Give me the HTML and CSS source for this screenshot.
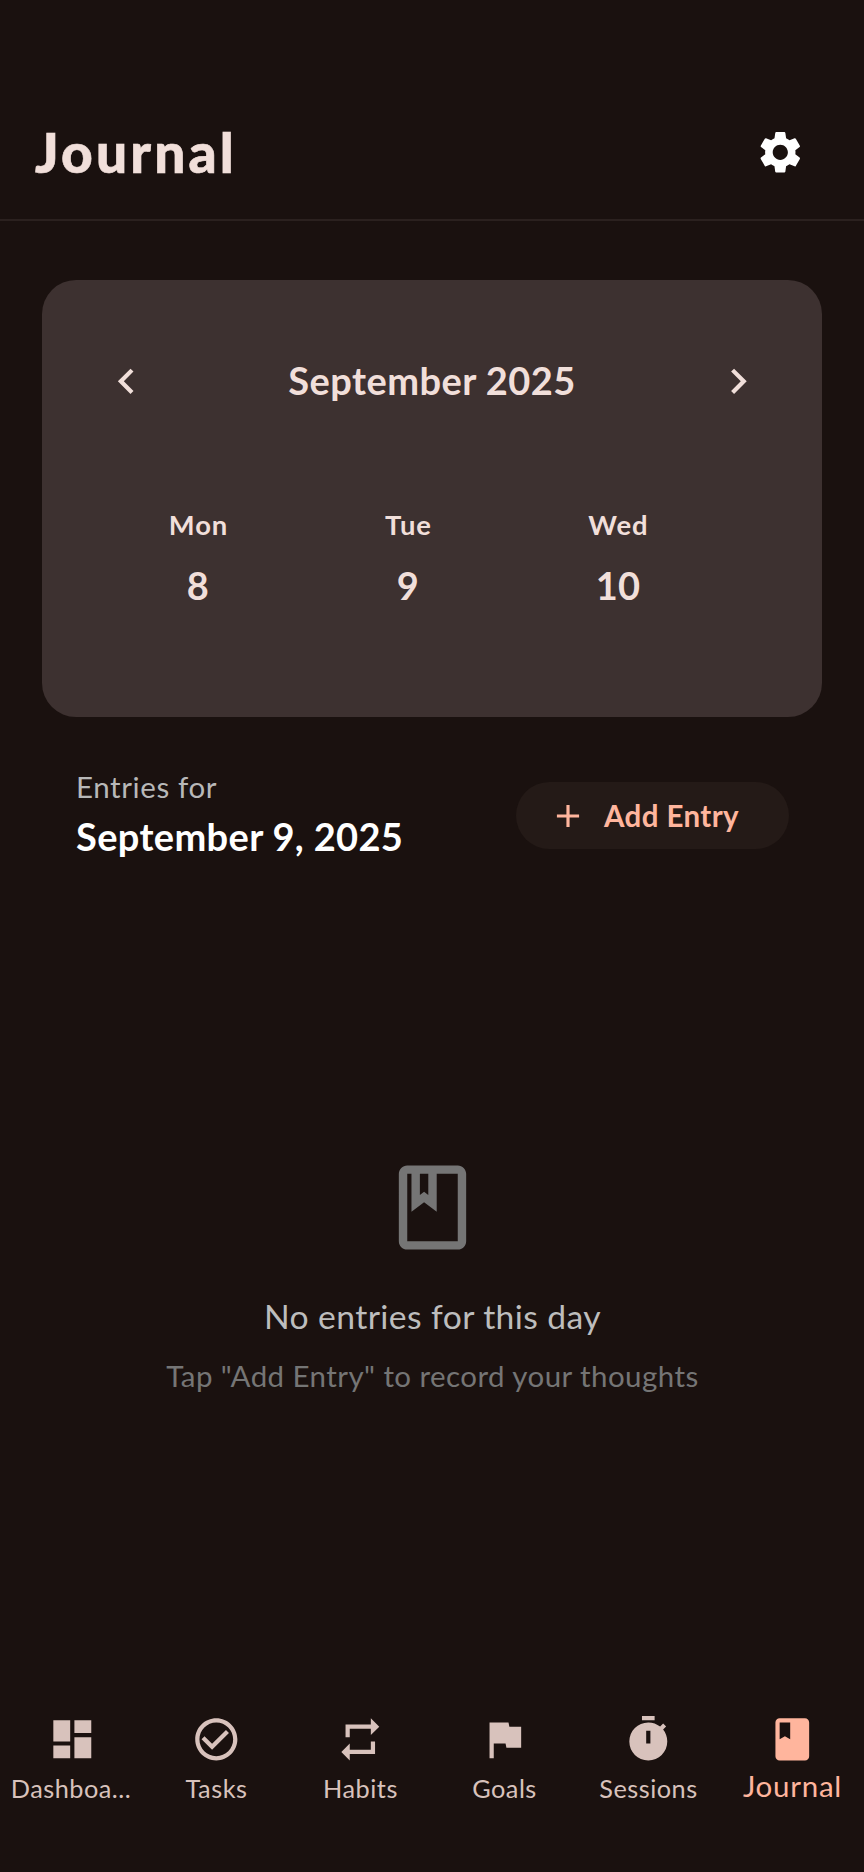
FILE: index.html
```html
<!DOCTYPE html>
<html lang="en">
<head>
<meta charset="utf-8">
<title>Journal</title>
<link rel="stylesheet" href="styles.css">
</head>
<body>
<div class="app">
  <header class="header">
    <h1 class="title">Journal</h1>
    <svg class="icon settings" viewBox="0 0 24 24"><path d="M19.14 12.94c.04-.3.06-.61.06-.94 0-.32-.02-.64-.07-.94l2.03-1.58c.18-.14.23-.41.12-.61l-1.92-3.32c-.12-.22-.37-.29-.59-.22l-2.39.96c-.5-.38-1.03-.7-1.62-.94l-.36-2.54c-.04-.24-.24-.41-.48-.41h-3.84c-.24 0-.43.17-.47.41l-.36 2.54c-.59.24-1.13.57-1.62.94l-2.39-.96c-.22-.08-.47 0-.59.22L2.74 8.87c-.12.21-.08.47.12.61l2.03 1.58c-.05.3-.09.63-.09.94s.02.64.07.94l-2.03 1.58c-.18.14-.23.41-.12.61l1.92 3.32c.12.22.37.29.59.22l2.39-.96c.5.38 1.03.7 1.62.94l.36 2.54c.05.24.24.41.48.41h3.84c.24 0 .44-.17.47-.41l.36-2.54c.59-.24 1.13-.56 1.62-.94l2.39.96c.22.08.47 0 .59-.22l1.92-3.32c.12-.22.07-.47-.12-.61l-2.01-1.58zM12 15.6c-1.98 0-3.6-1.62-3.6-3.6s1.62-3.6 3.6-3.6 3.6 1.62 3.6 3.6-1.62 3.6-3.6 3.6z"/></svg>
  </header>

  <section class="calendar">
    <div class="month">
      <svg class="icon" viewBox="0 0 24 24"><path d="M15.41 7.41L14 6l-6 6 6 6 1.41-1.41L10.83 12z"/></svg>
      <h2 class="month-name">September 2025</h2>
      <svg class="icon" viewBox="0 0 24 24"><path d="M10 6L8.59 7.41 13.17 12l-4.58 4.59L10 18l6-6z"/></svg>
    </div>
    <div class="days">
      <div class="day"><span class="weekday">Mon</span><span class="date">8</span></div>
      <div class="day"><span class="weekday">Tue</span><span class="date">9</span></div>
      <div class="day"><span class="weekday">Wed</span><span class="date">10</span></div>
    </div>
  </section>

  <section class="entries">
    <div class="entries-heading">
      <div class="entries-label">Entries for</div>
      <div class="entries-date">September 9, 2025</div>
    </div>
    <button class="add">
      <svg class="add-icon" viewBox="0 0 24 24"><path d="M19 13h-6v6h-2v-6H5v-2h6V5h2v6h6v2z"/></svg>
      <span>Add Entry</span>
    </button>
  </section>

  <main class="empty">
    <svg class="empty-icon" viewBox="0 0 24 24"><path d="M18 2H6c-1.1 0-2 .9-2 2v16c0 1.1.9 2 2 2h12c1.1 0 2-.9 2-2V4c0-1.1-.9-2-2-2zM9 4h2v5l-1-.75L9 9V4zm9 16H6V4h1v9l3-2.25L13 13V4h5v16z"/></svg>
    <p class="empty-title">No entries for this day</p>
    <p class="empty-hint">Tap "Add Entry" to record your thoughts</p>
  </main>

  <nav class="nav">
    <div class="tab">
      <svg class="icon" viewBox="0 0 24 24"><path d="M3 13h8V3H3v10zm0 8h8v-6H3v6zm10 0h8V11h-8v10zm0-18v6h8V3h-8z"/></svg>
      <span class="tab-label tab-label-long">Dashboa...</span>
    </div>
    <div class="tab">
      <svg class="icon" viewBox="0 0 24 24"><path d="M16.59 7.58L10 14.17l-3.59-3.58L5 12l5 5 8-8zM12 2C6.48 2 2 6.48 2 12s4.48 10 10 10 10-4.48 10-10S17.52 2 12 2zm0 18c-4.42 0-8-3.58-8-8s3.58-8 8-8 8 3.58 8 8-3.58 8-8 8z"/></svg>
      <span class="tab-label">Tasks</span>
    </div>
    <div class="tab">
      <svg class="icon" viewBox="0 0 24 24"><path d="M7 7h10v3l4-4-4-4v3H5v6h2V7zm10 10H7v-3l-4 4 4 4v-3h12v-6h-2v4z"/></svg>
      <span class="tab-label">Habits</span>
    </div>
    <div class="tab">
      <svg class="icon" viewBox="0 0 24 24"><path d="M14.4 6L14 4H5v17h2v-7h5.6l.4 2h7V6z"/></svg>
      <span class="tab-label">Goals</span>
    </div>
    <div class="tab">
      <svg class="icon" viewBox="0 0 24 24"><path fill-rule="evenodd" d="M15 1H9v2h6V1zM11 14h2V8h-2v6zM19.03 7.39l1.42-1.42c-.43-.51-.9-.99-1.41-1.41l-1.42 1.42C16.07 4.74 14.12 4 12 4c-4.97 0-9 4.03-9 9s4.02 9 9 9 9-4.03 9-9c0-2.12-.74-4.07-1.97-5.61z"/></svg>
      <span class="tab-label">Sessions</span>
    </div>
    <div class="tab tab-active">
      <svg class="icon" viewBox="0 0 24 24"><path d="M18 2H6c-1.1 0-2 .9-2 2v16c0 1.1.9 2 2 2h12c1.1 0 2-.9 2-2V4c0-1.1-.9-2-2-2zM6 4h5v8l-2.5-1.5L6 12V4z"/></svg>
      <span class="tab-label">Journal</span>
    </div>
  </nav>
</div>
</body>
</html>
```

FILE: styles.css
```css
* { box-sizing: border-box; }

body {
  margin: 0;
  background: #1a110f;
  color: #f1dfda;
  font-family: Lato, sans-serif;
}

h1, h2, p { margin: 0; }

svg { display: block; fill: currentColor; flex: none; }

.app {
  height: 1872px;
  display: flex;
  flex-direction: column;
  overflow: hidden;
}

.icon { width: 50.6px; height: 50.6px; }

.header {
  height: 221px;
  padding: 85px 58.5px 0 35px;
  display: flex;
  align-items: center;
  justify-content: space-between;
  border-bottom: 2px solid #2b211f;
}

.title {
  font-size: 55px;
  line-height: 66px;
  font-weight: 900;
  letter-spacing: 3.15px;
  -webkit-text-stroke: 0.6px currentColor;
}

.settings { color: #fff; }

.calendar {
  height: 437px;
  margin: 59px 42px 0;
  padding: 76px 58.5px 0;
  border-radius: 34px;
  background: #3d3130;
}

.month {
  display: flex;
  align-items: center;
  justify-content: space-between;
}

.month-name {
  margin-bottom: 2px;
  font-size: 38px;
  line-height: 48px;
  font-weight: 700;
  letter-spacing: 0.45px;
}

.days {
  display: grid;
  grid-template-columns: repeat(3, 210px);
  margin: 98px 0 0 -7.5px;
}

.day {
  display: flex;
  flex-direction: column;
  align-items: center;
  gap: 15.5px;
}

.weekday {
  padding-left: 1px;
  font-size: 27.4px;
  line-height: 40px;
  font-weight: 700;
  letter-spacing: 1px;
}

.date { font-size: 38px; line-height: 50px; font-weight: 700; letter-spacing: 0.3px; }

.entries {
  display: flex;
  justify-content: space-between;
  align-items: center;
  padding: 0 75px 0 76px;
  margin-top: 50px;
}

.entries-label { font-size: 29.5px; line-height: 40px; letter-spacing: 0.6px; color: #b8b8b8; }
.entries-date { font-size: 38px; line-height: 58px; font-weight: 700; letter-spacing: 0.35px; color: #fff; }

.add {
  width: 273.5px;
  height: 67.5px;
  margin-bottom: 1px;
  padding: 0 0 0 33.5px;
  display: flex;
  align-items: center;
  gap: 17px;
  border: 0;
  border-radius: 34px;
  background: #241a17;
  color: #ffb59d;
  font: 700 29.5px/40px Lato, sans-serif;
  letter-spacing: 0.4px;
}

.add-icon { width: 38px; height: 38px; }

.empty {
  flex: 1;
  padding-top: 291.6px;
  display: flex;
  flex-direction: column;
  align-items: center;
}

.empty-icon { width: 101px; height: 101px; color: #757575; }

.empty-title {
  margin-top: 38.3px;
  padding-left: 1px;
  font-size: 33.7px;
  line-height: 40px;
  letter-spacing: 0.4px;
  color: #bdbdbd;
}

.empty-hint {
  margin-top: 20.5px;
  padding-left: 1px;
  font-size: 29.5px;
  line-height: 40px;
  letter-spacing: 0.43px;
  color: #757575;
}

.nav {
  height: 157.6px;
  display: grid;
  grid-template-columns: repeat(6, 144px);
  color: #d8c2bc;
}

.tab {
  display: flex;
  flex-direction: column;
  align-items: center;
}

.tab-label {
  margin-top: 5px;
  padding-left: 1px;
  font-size: 25.3px;
  line-height: 36px;
  letter-spacing: 0.5px;
}

.tab-label-long { margin-right: 3px; }
.tab-active { color: #ffb59d; }
.tab-active .tab-label { font-size: 29.5px; margin-top: 3px; letter-spacing: 0.75px; }
```
